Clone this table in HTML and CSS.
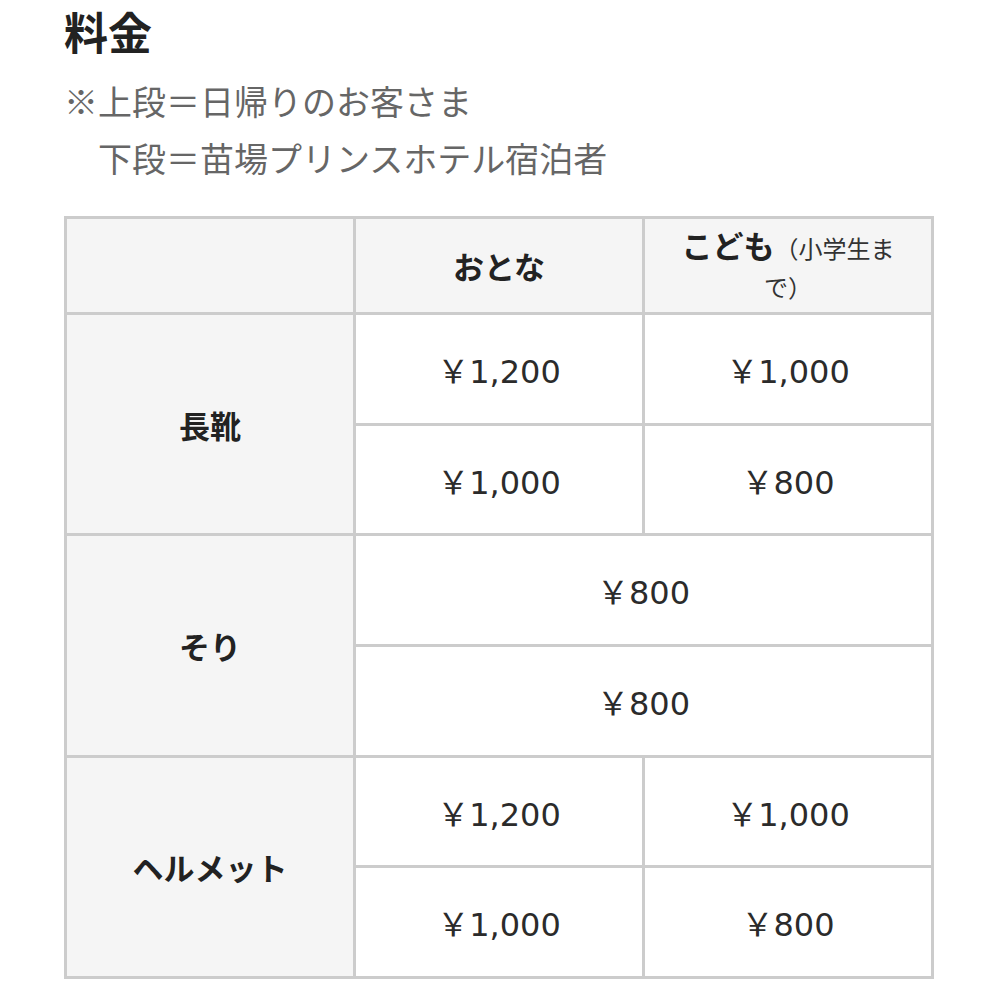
FILE: index.html
```html
<!DOCTYPE html>
<html lang="ja">
<head>
<meta charset="utf-8">
<title>料金</title>
<link rel="stylesheet" href="styles.css">
</head>
<body>
<main class="page">
  <h2 class="title">料金</h2>
  <p class="note">※上段＝日帰りのお客さま<br>　下段＝苗場プリンスホテル宿泊者</p>
  <table class="price-table">
    <colgroup><col><col><col></colgroup>
    <thead>
      <tr>
        <th class="head"></th>
        <th class="head">おとな</th>
        <th class="head">こども<span class="sub">（小学生まで）</span></th>
      </tr>
    </thead>
    <tbody>
      <tr>
        <th class="item" rowspan="2">長靴</th>
        <td>￥1,200</td>
        <td>￥1,000</td>
      </tr>
      <tr>
        <td>￥1,000</td>
        <td>￥800</td>
      </tr>
      <tr>
        <th class="item" rowspan="2">そり</th>
        <td colspan="2">￥800</td>
      </tr>
      <tr>
        <td colspan="2">￥800</td>
      </tr>
      <tr>
        <th class="item" rowspan="2">ヘルメット</th>
        <td>￥1,200</td>
        <td>￥1,000</td>
      </tr>
      <tr>
        <td>￥1,000</td>
        <td>￥800</td>
      </tr>
    </tbody>
  </table>
</main>
</body>
</html>
```
FILE: styles.css
```css
html, body {
  margin: 0;
  padding: 0;
  background: #fff;
}
body {
  font-family: "Noto Sans CJK JP", "Noto Sans", sans-serif;
  color: #333;
}
.page {
  padding: 0 64px;
}
.title {
  margin: 0;
  font-size: 44px;
  line-height: 62px;
  font-weight: bold;
  color: #222;
}
.note {
  margin: 10px 0 0;
  font-size: 34px;
  line-height: 57px;
  color: #666;
}
.price-table {
  margin-top: 30px;
  width: 870px;
  border-collapse: collapse;
  table-layout: fixed;
}
.price-table th,
.price-table td {
  border: 3px solid #ccc;
  text-align: center;
  vertical-align: middle;
}
.price-table td {
  height: 107.7px;
  padding: 0 10px;
  font-family: "DejaVu Sans", "Noto Sans CJK JP", sans-serif;
  font-size: 32px;
  color: #2b2b2b;
  background: #fff;
}
.price-table th {
  background: #f5f5f5;
  color: #222;
  font-weight: bold;
  font-size: 31px;
}
.price-table .head {
  height: 93px;
  padding: 0 20px;
  line-height: 36px;
}
.price-table .sub {
  font-size: 24px;
  font-weight: normal;
  color: #333;
}
.price-table .item {
  padding: 0 10px;
}
```
